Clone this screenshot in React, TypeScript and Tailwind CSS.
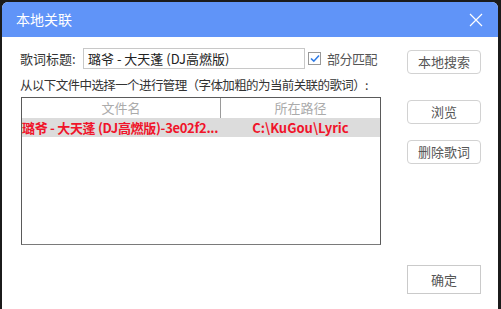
export default function App() {
  return (
    <div className="h-[309px] w-[501px] overflow-hidden bg-[#1b1b1b] pl-[2px] pr-[3px] pt-[2px] font-['Microsoft_YaHei','Noto_Sans_CJK_SC',sans-serif]">
      <div className="flex h-[320px] flex-col overflow-hidden rounded-t-[6px] bg-white">
        <div className="flex h-[35px] shrink-0 items-center justify-between bg-[#6094f8] pl-[14px] pr-[15px]">
          <span className="text-[14px] text-white">本地关联</span>
          <svg width="14" height="14" viewBox="0 0 14 14">
            <path d="M1 1L13 13M13 1L1 13" stroke="white" strokeWidth="1.2" />
          </svg>
        </div>

        <div className="flex pl-[18px] pr-[17px]">
          <div className="w-[362px]">
            <div className="mt-[11px] flex h-[21px] items-center text-[13px] text-[#333]">
              <span className="w-[63px]">歌词标题:</span>
              <div className="flex h-[21px] w-[222px] items-center border border-[#c8c8c8] px-[4px] text-[13px] text-[#222]">
                璐爷 - 大天蓬 (DJ高燃版)
              </div>
              <span className="ml-[3px] flex h-[13px] w-[13px] items-center justify-center border border-[#999]">
                <svg width="10" height="9" viewBox="0 0 10 9">
                  <path d="M1 4.5L3.8 7.2L9 1.5" stroke="#2f7be6" strokeWidth="1.6" fill="none" />
                </svg>
              </span>
              <span className="ml-[6px] tracking-[-0.5px] text-[#555]">部分匹配</span>
            </div>

            <div className="mt-[7px] whitespace-nowrap text-[12.5px] leading-[18px] tracking-[-0.6px] text-[#333]">
              从以下文件中选择一个进行管理（字体加粗的为当前关联的歌词）:
            </div>

            <div className="ml-px mt-[3px] h-[148px] w-[360px] border border-[#5a5a5a] border-b-[#7a7a7a]">
              <div className="flex h-[20px] text-[13px] text-[#ababab]">
                <div className="flex w-[199px] items-center justify-center border-r border-[#9a9a9a]">文件名</div>
                <div className="flex flex-1 items-center justify-center">所在路径</div>
              </div>
              <div className="flex h-[19px] items-center bg-[#dcdcdc] text-[13px] font-bold text-[#f0142a]">
                <div className="w-[199px] overflow-hidden whitespace-nowrap tracking-[-0.3px]">璐爷 - 大天蓬 (DJ高燃版)-3e02f2...</div>
                <div className="flex-1 text-center">C:\KuGou\Lyric</div>
              </div>
            </div>
          </div>

          <div className="ml-auto flex w-[74px] flex-col text-[13px] text-[#555]">
            <button className="mt-[13px] h-[24px] rounded-[4px] border border-[#d2d2d2] bg-white">本地搜索</button>
            <button className="mt-[26px] h-[24px] rounded-[4px] border border-[#d2d2d2] bg-white">浏览</button>
            <button className="mt-[16px] h-[24px] rounded-[4px] border border-[#d2d2d2] bg-white">删除歌词</button>
            <button className="mt-[101px] h-[29px] border border-[#cacaca] bg-white">确定</button>
          </div>
        </div>
      </div>
    </div>
  );
}
